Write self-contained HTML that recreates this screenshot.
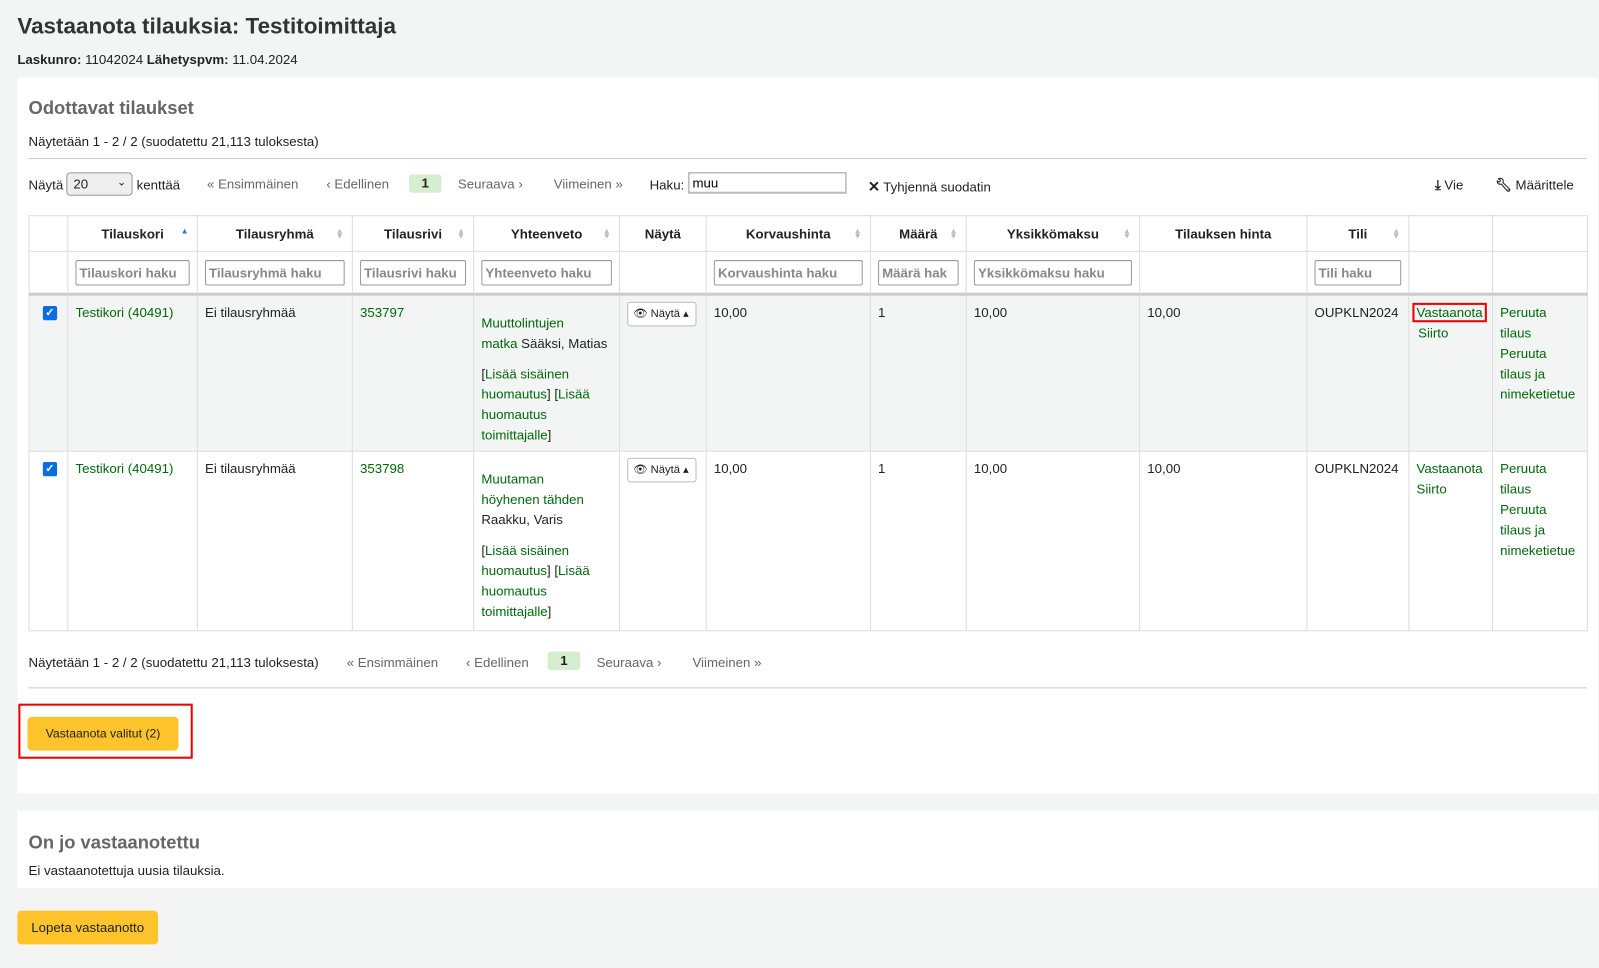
<!DOCTYPE html>
<html><head><meta charset="utf-8"><style>
*{box-sizing:border-box}
body{margin:0;background:#f3f4f4;font-family:"Liberation Sans",sans-serif;font-size:13px;color:#222;width:1599px;height:968px;overflow:hidden;position:relative}
#w{position:absolute;left:0;top:0;width:1568px;height:949px;transform:scale(1.0198);transform-origin:0 0}
.abs{position:absolute}
h1{position:absolute;left:17px;top:13px;margin:0;font-size:22px;font-weight:bold;color:#333}
.sub{left:17px;top:51px}
.panel{background:#fff;position:absolute;left:17px;width:1550px}
h2{margin:0;font-size:18px;font-weight:bold;color:#666;position:absolute}
.g{color:#00680a}
.hr{position:absolute;left:11px;width:1528px;height:1px;background:#ccc}
.pg span{position:absolute;color:#666;white-space:nowrap}
.cur{background:#d6eed0;color:#222!important;border-radius:3px;width:32px;height:18px;text-align:center;line-height:18px;font-weight:bold}
table{position:absolute;left:11px;top:135px;border-collapse:collapse;table-layout:fixed;width:1528px}
td,th{border:1px solid #ddd;vertical-align:top;padding:0 7px;white-space:nowrap;overflow:hidden}
th{height:35px;vertical-align:middle;font-weight:bold;text-align:center;position:relative}
th .s{position:absolute;right:8px;top:12px;color:#bbb;font-size:8px;line-height:5px}
tr.f td{height:42px;vertical-align:middle;border-bottom:3px solid #ccc;padding:0 7px}
.inp{border:1px solid #999;border-radius:2px;height:25px;color:#888;font-weight:bold;line-height:23px;padding-left:3px;overflow:hidden;font-size:13px}
tr.r td{padding-top:7px;line-height:20px}
tr.r1 td{background:#f3f4f4;height:154px}
tr.r2 td{height:176px}
.cb{width:14px;height:14px;background:#0a6ee0;border-radius:2px;margin:3px 0 0 6px;color:#fff;font-size:11px;line-height:14px;text-align:center;font-weight:bold}
.btn{display:inline-block;border:1px solid #bbb;border-radius:3px;height:24px;width:68px;font-size:11px;line-height:22px;padding-left:5px;margin-top:-2px;background:#fff}
.yb{position:absolute;background:#ffc32b;border-radius:4px;color:#222;text-align:center}
.red{outline:2px solid #e00;outline-offset:0}
</style></head><body><div id="w">
<h1>Vastaanota tilauksia: Testitoimittaja</h1>
<div class="abs sub"><b>Laskunro:</b> 11042024 <b>Lähetyspvm:</b> 11.04.2024</div>
<div class="panel" style="top:76px;height:702px">
<h2 style="left:11px;top:20px">Odottavat tilaukset</h2>
<div class="abs" style="left:11px;top:55px">Näytetään 1 - 2 / 2 (suodatettu 21,113 tuloksesta)</div>
<div class="hr" style="top:79px"></div>
<div class="abs" style="left:11px;top:98px">Näytä</div>
<div class="abs" style="left:48px;top:93px;width:65px;height:23px;border:1px solid #999;border-radius:4px;background:#eee;padding:3px 6px">20<span style="position:absolute;right:5px;top:2px;font-size:11px">&#8964;</span></div>
<div class="abs" style="left:117px;top:98px">kenttää</div>
<div class="pg">
<span style="left:186px;top:97px">« Ensimmäinen</span>
<span style="left:303px;top:97px">‹ Edellinen</span>
<span class="cur" style="left:384px;top:95px">1</span>
<span style="left:432px;top:97px">Seuraava ›</span>
<span style="left:526px;top:97px">Viimeinen »</span>
</div>
<div class="abs" style="left:620px;top:98px">Haku:</div>
<div class="abs" style="left:658px;top:93px;width:155px;height:21px;border:1px solid #999;border-bottom:2px solid #bbb;padding:2px 3px;color:#000">muu</div>
<div class="abs" style="left:834px;top:99px"><b style="font-size:14px">✕</b> Tyhjennä suodatin</div>
<div class="abs" style="left:1390px;top:98px"><b>⤓</b> Vie</div>
<div class="abs" style="left:1449px;top:98px"><b>🔧︎</b> Määrittele</div>
<table>
<colgroup><col style="width:38px"><col style="width:127px"><col style="width:152px"><col style="width:119px"><col style="width:143px"><col style="width:85px"><col style="width:161px"><col style="width:94px"><col style="width:170px"><col style="width:164px"><col style="width:100px"><col style="width:82px"><col style="width:93px"></colgroup>
<tr><th></th><th>Tilauskori<span class="s" style="color:#2a7ae0">▲</span></th><th>Tilausryhmä<span class="s">▲<br>▼</span></th><th>Tilausrivi<span class="s">▲<br>▼</span></th><th>Yhteenveto<span class="s">▲<br>▼</span></th><th>Näytä</th><th>Korvaushinta<span class="s">▲<br>▼</span></th><th>Määrä<span class="s">▲<br>▼</span></th><th>Yksikkömaksu<span class="s">▲<br>▼</span></th><th>Tilauksen hinta</th><th>Tili<span class="s">▲<br>▼</span></th><th></th><th></th></tr>
<tr class="f"><td></td><td><div class="inp">Tilauskori haku</div></td><td><div class="inp">Tilausryhmä haku</div></td><td><div class="inp">Tilausrivi haku</div></td><td><div class="inp">Yhteenveto haku</div></td><td></td><td><div class="inp">Korvaushinta haku</div></td><td><div class="inp">Määrä hak</div></td><td><div class="inp">Yksikkömaksu haku</div></td><td></td><td><div class="inp">Tili haku</div></td><td></td><td></td></tr>
<tr class="r r1"><td><div class="cb">✓</div></td><td class="g">Testikori (40491)</td><td>Ei tilausryhmää</td><td class="g">353797</td><td><div style="margin-top:10px"><span class="g">Muuttolintujen<br>matka</span> Sääksi, Matias</div><div style="margin-top:10px">[<span class="g">Lisää sisäinen<br>huomautus</span>] [<span class="g">Lisää<br>huomautus<br>toimittajalle</span>]</div></td><td><span class="btn">👁︎ Näytä ▴</span></td><td>10,00</td><td>1</td><td>10,00</td><td>10,00</td><td>OUPKLN2024</td><td class="g" style="padding-left:5px"><span class="red" style="padding:0 2px">Vastaanota</span><br>&nbsp;Siirto</td><td class="g">Peruuta<br>tilaus<br>Peruuta<br>tilaus ja<br>nimeketietue</td></tr>
<tr class="r r2"><td><div class="cb">✓</div></td><td class="g">Testikori (40491)</td><td>Ei tilausryhmää</td><td class="g">353798</td><td><div style="margin-top:10px"><span class="g">Muutaman<br>höyhenen tähden</span><br>Raakku, Varis</div><div style="margin-top:10px">[<span class="g">Lisää sisäinen<br>huomautus</span>] [<span class="g">Lisää<br>huomautus<br>toimittajalle</span>]</div></td><td><span class="btn">👁︎ Näytä ▴</span></td><td>10,00</td><td>1</td><td>10,00</td><td>10,00</td><td>OUPKLN2024</td><td class="g">Vastaanota<br>Siirto</td><td class="g">Peruuta<br>tilaus<br>Peruuta<br>tilaus ja<br>nimeketietue</td></tr>
</table>
<div class="abs" style="left:11px;top:566px">Näytetään 1 - 2 / 2 (suodatettu 21,113 tuloksesta)</div>
<div class="pg">
<span style="left:323px;top:566px">« Ensimmäinen</span>
<span style="left:440px;top:566px">‹ Edellinen</span>
<span class="cur" style="left:520px;top:563px">1</span>
<span style="left:568px;top:566px">Seuraava ›</span>
<span style="left:662px;top:566px">Viimeinen »</span>
</div>
<div class="hr" style="top:598px"></div>
<div class="abs" style="left:1px;top:614px;width:171px;height:54px;border:2px solid #e00"></div>
<div class="yb" style="left:10px;top:627px;width:148px;height:33px;line-height:33px;font-size:12px">Vastaanota valitut (2)</div>
</div>
<div class="panel" style="top:795px;height:76px">
<h2 style="left:11px;top:21px">On jo vastaanotettu</h2>
<div class="abs" style="left:11px;top:51px">Ei vastaanotettuja uusia tilauksia.</div>
</div>
<div class="yb" style="left:17px;top:893px;width:138px;height:33px;line-height:33px">Lopeta vastaanotto</div>
</div></body></html>
